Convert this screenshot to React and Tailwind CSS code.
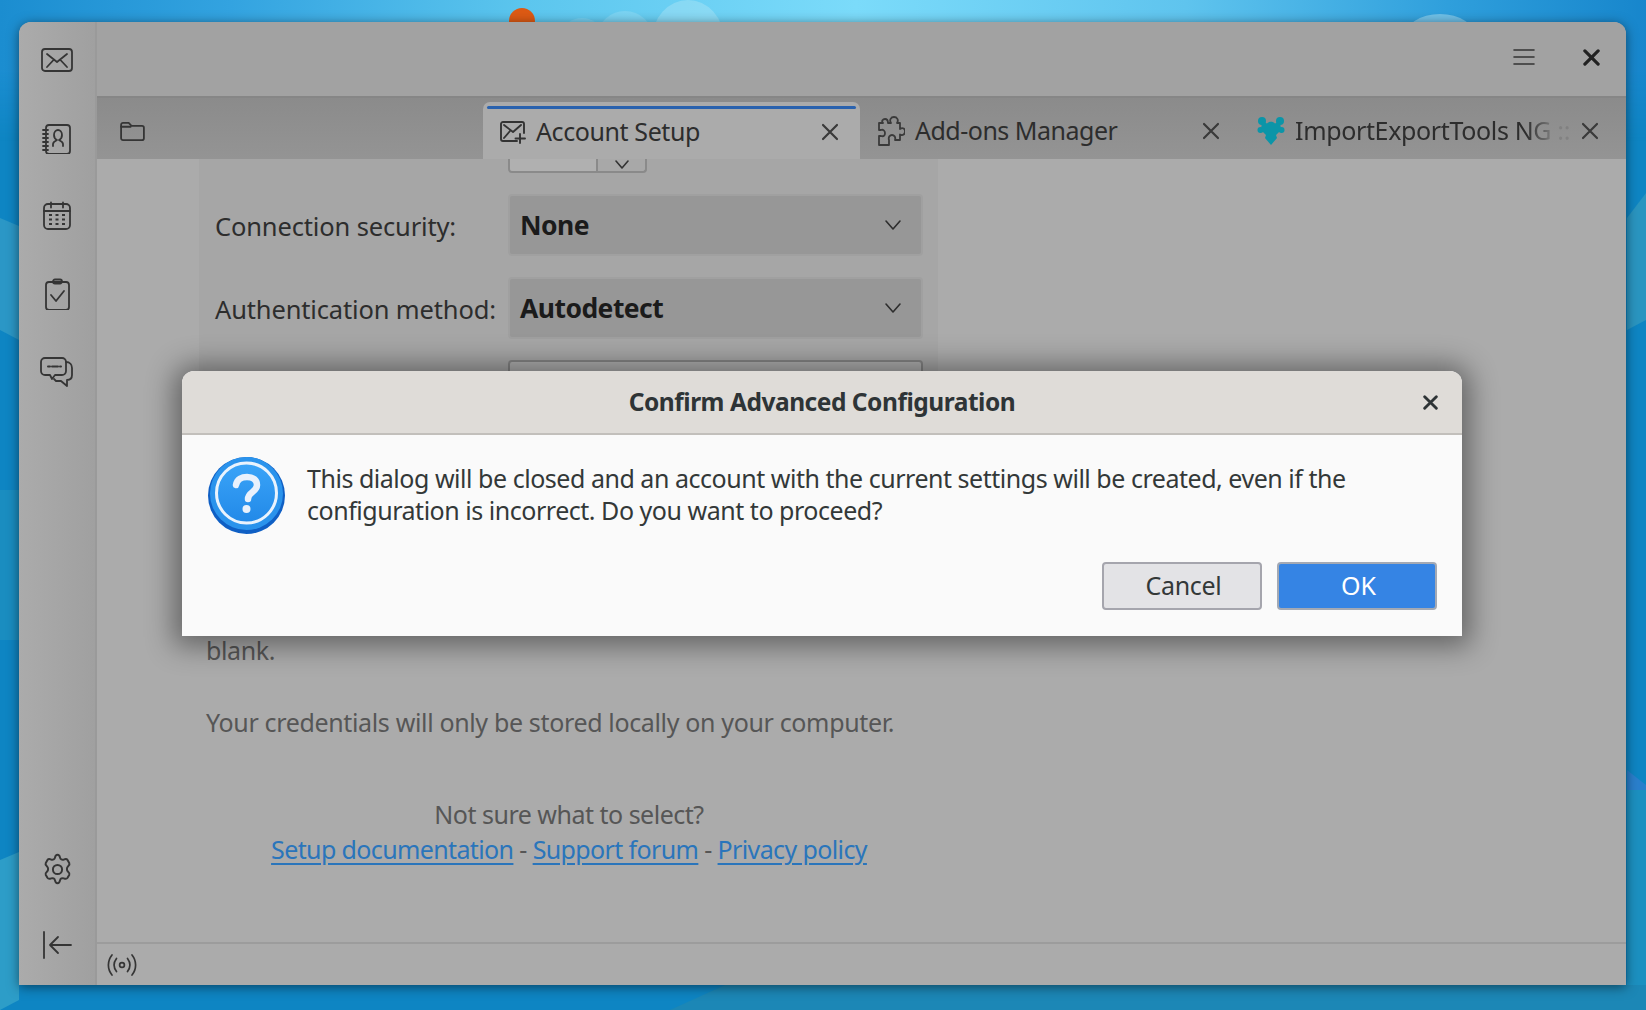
import React from "react";

const Ic = ({ w = 32, h = 32, vb = "0 0 32 32", sw = 1.8, c = "#353535", children, className = "" }) => (
  <svg width={w} height={h} viewBox={vb} fill="none" stroke={c} strokeWidth={sw} strokeLinecap="round" strokeLinejoin="round" className={className}>{children}</svg>
);

const X = ({ s = 18, sw = 2.2, c = "#3a3a3a" }) => (
  <Ic w={s} h={s} vb="0 0 18 18" sw={sw} c={c}><path d="M2 2l14 14M16 2L2 16" /></Ic>
);
const Chevron = ({ c = "#333" }) => (
  <Ic w={18} h={12} vb="0 0 18 12" sw={1.6} c={c}><path d="M2 2l7 8 7-8" /></Ic>
);

const Mail = () => (
  <Ic><rect x="1" y="5" width="30" height="22" rx="3" /><path d="M6 10l10 8 10-8M6 23l7-7.5M26 23l-7-7.5" /></Ic>
);
const Contacts = () => (
  <Ic><rect x="5" y="3" width="24" height="29" rx="3" /><path d="M2 8h5M2 12h5M2 16h5M2 20h5M2 24h5M2 28h5" /><path d="M12 24v-2c0-2 2-3 4-4-2-1-3-3-3-5 0-3 2-5 4-5s4 2 4 5c0 2-1 4-3 5 2 1 4 2 4 4v2" /></Ic>
);
const Calendar = () => (
  <Ic><rect x="3" y="4" width="26" height="25" rx="4" /><path d="M3 11h26M10 2.5v5M22 2.5v5" /><path strokeWidth="2.2" strokeLinecap="butt" d="M8 15h3M14.5 15h3M21 15h3M8 19.5h3M14.5 19.5h3M21 19.5h3M8 24h3M14.5 24h3M21 24h3" /></Ic>
);
const Tasks = () => (
  <Ic><rect x="5" y="4" width="23" height="28" rx="3" /><rect x="12" y="1.5" width="9" height="4" rx="2" /><path d="M10 17l5 6 8-10" /></Ic>
);
const Chat = () => (
  <Ic w={34} h={34} vb="0 0 34 34"><path d="M5 2h17a4 4 0 0 1 4 4v9a4 4 0 0 1-4 4h-7l-3 4-2-4H5a4 4 0 0 1-4-4V6a4 4 0 0 1 4-4z" /><path strokeWidth="2" d="M8 10.5h2M12 10.5h6M20 10.5h1" /><path d="M26 6c4 0 6 3 6 6v7c0 3-2 5-5 5v6l-6-5h-5l-2-2" /></Ic>
);
const Gear = () => (
  <Ic w={35} h={35}><circle cx="16" cy="16" r="4.2" /><path d="M16 2.5c1.600 0 2 1 2.300 2.600.3 1.500 1.900 2.400 3.400 1.800 1.500-.6 2.700-.8 3.500.5l1.600 2.800c.7 1.300-.2 2-1.300 3-1.200 1-1.200 3.600 0 4.600 1.100 1 2 1.700 1.300 3l-1.600 2.800c-.8 1.300-2 1.100-3.500.5-1.500-.6-3.100.3-3.400 1.800-.3 1.600-.7 2.600-2.300 2.600s-2-1-2.300-2.600c-.3-1.500-1.900-2.400-3.400-1.800-1.500.6-2.700.8-3.500-.5l-1.600-2.800c-.7-1.300.2-2 1.300-3 1.200-1 1.200-3.600 0-4.600-1.100-1-2-1.700-1.300-3l1.600-2.800c.8-1.300 2-1.100 3.500-.5 1.500.6 3.100-.3 3.400-1.800.3-1.600.7-2.600 2.300-2.600z" /></Ic>
);
const Collapse = () => (
  <Ic><path d="M3 3v26M30 16H9M17 8l-8 8 8 8" /></Ic>
);
const Signal = () => (
  <Ic w={30} h={24} vb="0 0 30 24" sw={1.7}><circle cx="15" cy="12" r="2.4" /><path d="M9.500 5.500c-3 4-3 9 0 13M20.500 5.500c3 4 3 9 0 13M5 2c-4.800 6-4.800 14 0 20M25 2c4.800 6 4.800 14 0 20" /></Ic>
);
const Folder = () => (
  <Ic w={25} h={19} vb="0 0 26 20" sw={1.9}><path d="M1 3a2 2 0 0 1 2-2h6l3 3h11a2 2 0 0 1 2 2v11a2 2 0 0 1-2 2H3a2 2 0 0 1-2-2z" /><path d="M1 5h10" /></Ic>
);
const AccountIcon = () => (
  <Ic w={26} h={24} vb="0 0 26 24" sw={1.9} c="#333"><path d="M24 13V4a2 2 0 0 0-2-2H3a2 2 0 0 0-2 2v15a2 2 0 0 0 2 2h14" /><path d="M4 5l9 7 8-7M4 18l6-7" /><path d="M20 14v9M15.500 18.500H25" /></Ic>
);
const Puzzle = () => (
  <Ic w={28} h={30} vb="0 0 28 30" sw={1.8} c="#3a3a3a"><path d="M11 7h3c-2-3 0-6 3-6s5 3 3 6h3v6c3-2 5 0 5 2.500S26 20 23 18.500V24h-5c1-3-1-5-3-5s-4 2-3 5v5H2v-9h2c3 1 4-1 4-3s-2-4-4-3H2V7h4c-2-2 0-4 2-4s3 2 3 4z" /></Ic>
);
const TealPuzzle = () => (
  <svg width="28" height="30" viewBox="0 0 28 30" fill="#0b95a8">
    <circle cx="5" cy="5" r="4" /><circle cx="23" cy="5" r="4" /><circle cx="3.500" cy="14" r="3" /><circle cx="24.500" cy="14" r="3" />
    <path d="M5 5l5 2.500c2-2.500 6-2.500 8 0L23 5l1 9-5 5 1 3-6 7-6-7 1-3-5-5z" />
  </svg>
);
const Question = () => (
  <svg width="77" height="77" viewBox="0 0 77 77">
    <defs>
      <linearGradient id="q" x1="0" y1="0" x2="0" y2="1"><stop offset="0" stopColor="#3aa4f8" /><stop offset="1" stopColor="#2289e8" /></linearGradient>
    </defs>
    <circle cx="38.500" cy="38.500" r="38.500" fill="#0f5fc4" />
    <circle cx="38.500" cy="36.500" r="36.500" fill="#2a93ec" />
    <circle cx="38.500" cy="36" r="30" fill="url(#q)" stroke="#e9f3fd" strokeWidth="3" />
    <path d="M28 28c1-6 6-8 11-8 6 0 10 3 10 8 0 7-9 7-9 14" fill="none" stroke="#e9f1fc" strokeWidth="6.500" strokeLinecap="round" />
    <circle cx="38.500" cy="52" r="4" fill="#e9f1fc" />
  </svg>
);

const Wallpaper = () => (
  <svg className="absolute inset-0" width="1646" height="1010" viewBox="0 0 1646 1010">
    <defs>
      <linearGradient id="top" x1="0" y1="0" x2="1" y2="0">
        <stop offset="0" stopColor="#1b8dd0" /><stop offset="0.14" stopColor="#33a3e0" /><stop offset="0.32" stopColor="#5cc6ee" /><stop offset="0.52" stopColor="#7bdbfa" /><stop offset="0.72" stopColor="#5fc4ee" /><stop offset="0.88" stopColor="#2f9fdc" /><stop offset="1" stopColor="#1786cc" />
      </linearGradient>
      <linearGradient id="fade" x1="0" y1="0" x2="0" y2="1">
        <stop offset="0" stopColor="#fff" /><stop offset="0.07" stopColor="#fff" /><stop offset="0.14" stopColor="#000" /><stop offset="1" stopColor="#000" />
      </linearGradient>
      <mask id="m"><rect width="1646" height="1010" fill="url(#fade)" /></mask>
    </defs>
    <rect width="1646" height="1010" fill="#0e85c3" />
    <rect width="1646" height="1010" fill="url(#top)" mask="url(#m)" />
    <path d="M0 218L19 226V340L0 330Z" fill="#2b97c6" />
    <path d="M0 490L19 490V640H0Z" fill="#1a8dc0" />
    <path d="M0 860L19 852V1000L0 1010Z" fill="#2d9dc8" />
    <path d="M1627 218L1646 193V320L1627 330Z" fill="#2a95c0" />
    <path d="M1627 770L1646 785V800L1627 790Z" fill="#2a7fcc" />
    <path d="M1627 790H1646V1010H1627Z" fill="#1c90c0" />
    <path d="M670 1010L725 985H1646V1010Z" fill="#1c87b6" />
    <circle cx="522" cy="21" r="13" fill="#dd5a14" />
    <ellipse cx="688" cy="40" rx="36" ry="40" fill="#c8ebf5" fillOpacity="0.32" />
    <ellipse cx="625" cy="38" rx="28" ry="27" fill="#c8ebf5" fillOpacity="0.22" />
    <ellipse cx="582" cy="32" rx="18" ry="14" fill="#c8ebf5" fillOpacity="0.18" />
    <ellipse cx="1440" cy="38" rx="36" ry="24" fill="#c8ebf5" fillOpacity="0.42" />
  </svg>
);

const Select = ({ children }) => (
  <div className="h-[62px] w-[415px] rounded-[4px] border-2 border-[#a0a0a0] bg-[#979797] flex items-center justify-between pl-[10px] pr-[19px]">
    <span className="text-[26.5px] font-bold text-[#1b1b1b] tracking-[-0.55px] pt-[2px]">{children}</span>
    <Chevron c="#2e2e2e" />
  </div>
);

const Row = ({ label, children, className = "" }) => (
  <div className={`flex items-center shrink-0 ${className}`}>
    <span className="w-[309px] pl-[16px] pt-[2px] shrink-0 text-[25.5px] text-[#2d2d2d] tracking-[-0.15px] whitespace-nowrap">{label}</span>
    {children}
  </div>
);

export default function App() {
  return (
    <div className="relative w-[1646px] h-[1010px] overflow-hidden pl-[19px] pt-[22px] font-['Noto_Sans',sans-serif]">
      <Wallpaper />

      {/* window */}
      <div className="relative w-[1607px] h-[963px] rounded-t-[12px] overflow-hidden flex bg-[#ababab] shadow-[0_2px_12px_rgba(0,0,0,0.5)]">
        <aside className="w-[78px] shrink-0 flex flex-col items-center border-r-2 border-[#9a9a9a] bg-[linear-gradient(90deg,#ababab,#a0a0a0)] pt-[22px] pb-[24px]">
          <div className="flex flex-col items-center gap-[46px]">
            <Mail /><Contacts /><Calendar /><Tasks /><Chat />
          </div>
          <div className="mt-auto flex flex-col items-center gap-[42px]">
            <Gear /><Collapse />
          </div>
        </aside>

        <div className="flex-1 min-w-0 flex flex-col">
          <header className="h-[74px] shrink-0 bg-[#a2a2a2] flex items-center justify-end pr-[26px] pb-[4px] gap-[48px]">
            <Ic w={22} h={18} vb="0 0 22 18" sw={1.6} c="#333"><path d="M1 2h20M1 9h20M1 16h20" /></Ic>
            <X s={17} sw={3.4} c="#222" />
          </header>

          <nav className="h-[63px] shrink-0 border-t-2 border-[#868686] bg-[linear-gradient(180deg,#8b8b8b,#949494)] flex items-end pl-[23px] relative">
            <div className="w-[363px] h-[57px] shrink-0 flex items-center pt-[2px]"><Folder /></div>
            <div className="w-[377px] h-[57px] shrink-0 rounded-t-[7px] bg-[#ababab] px-[4px] pt-[4px] flex flex-col">
              <div className="h-[3px] bg-[#2a62ae] rounded-[2px]" />
              <div className="flex-1 flex items-center pl-[13px] pr-[17px] pb-[4px]">
                <AccountIcon />
                <span className="ml-[10px] text-[25px] text-[#2d2d2d] tracking-[-0.4px] whitespace-nowrap">Account Setup</span>
                <span className="ml-auto"><X /></span>
              </div>
            </div>
            <div className="w-[380px] h-[57px] shrink-0 flex items-center pl-[17px] pr-[20px] pt-[1px]">
              <Puzzle />
              <span className="ml-[10px] text-[25px] text-[#2d2d2d] tracking-[-0.5px] whitespace-nowrap">Add-ons Manager</span>
              <span className="ml-auto"><X /></span>
            </div>
            <div className="flex-1 min-w-0 h-[57px] flex items-center pl-[17px] pr-[27px] pt-[1px]">
              <TealPuzzle />
              <span className="ml-[10px] text-[25px] text-[#2d2d2d] tracking-[-0.35px] whitespace-nowrap [mask-image:linear-gradient(90deg,#000_84%,rgba(0,0,0,0.15)_94%)]">ImportExportTools NG ::</span>
              <span className="ml-auto"><X /></span>
            </div>
          </nav>

          <main className="flex-1 min-h-0 overflow-hidden pl-[102px] bg-[#ababab]">
            <div className="w-[739px] h-[300px] bg-[#a6a6a6] flex flex-col">
              <div className="ml-[309px] w-[139px] h-[14px] shrink-0 border-2 border-t-0 border-[#8a8a8a] rounded-b-[4px] bg-[#a8a8a8] flex">
                <div className="w-[88px] border-r-2 border-[#8a8a8a] bg-[#b0b0b0] rounded-bl-[3px]" />
                <div className="flex-1 flex justify-center items-end pb-[2px]"><Ic w={14} h={9} vb="0 0 14 9" sw={1.6} c="#333"><path d="M1 1l6 7 6-7" /></Ic></div>
              </div>
              <Row label="Connection security:" className="mt-[21px]"><Select>None</Select></Row>
              <Row label="Authentication method:" className="mt-[21px]"><Select>Autodetect</Select></Row>
              <div className="ml-[309px] mt-[21px] h-[62px] w-[415px] shrink-0 rounded-[4px] border-2 border-[#858585] bg-[#b0b0b0]" />
            </div>
          </main>

          <footer className="h-[43px] shrink-0 border-t-2 border-[#9c9c9c] bg-[#ababab] flex items-center pl-[10px]">
            <Signal />
          </footer>
        </div>

        {/* lower text over the content column */}
        <div className="absolute left-[187px] top-[610px] w-[740px] text-[25px] text-[#565656] tracking-[-0.4px]">
          <div className="h-[36px] leading-[36px]">blank.</div>
          <div className="mt-[36px] h-[36px] leading-[36px] tracking-[-0.35px]">Your credentials will only be stored locally on your computer.</div>
          <div className="mt-[57px] w-[726px] text-center leading-[35px] tracking-[-0.5px]">
            <div>Not sure what to select?</div>
            <div className="whitespace-nowrap tracking-[-0.62px]">
              <a className="text-[#2a75bb] underline underline-offset-[4px]">Setup documentation</a>
              {" - "}
              <a className="text-[#2a75bb] underline underline-offset-[4px]">Support forum</a>
              {" - "}
              <a className="text-[#2a75bb] underline underline-offset-[4px]">Privacy policy</a>
            </div>
          </div>
        </div>
      </div>

      {/* modal */}
      <div className="absolute left-[182px] top-[371px] w-[1280px] h-[265px] rounded-t-[12px] bg-[#fafafa] flex flex-col shadow-[0_2px_28px_8px_rgba(0,0,0,0.42)]">
        <div className="h-[64px] shrink-0 rounded-t-[12px] bg-[#dfdcd8] border-b-2 border-[#c2bfbb] relative flex items-center justify-center">
          <span className="text-[24.5px] font-bold text-[#2e3436] tracking-[-0.47px]">Confirm Advanced Configuration</span>
          <span className="absolute right-[24px] top-[24px]"><X s={15} sw={3.4} c="#2e3436" /></span>
        </div>
        <div className="flex-1 flex flex-col pl-[26px] pr-[25px]">
          <div className="flex pt-[22px]">
            <Question />
            <p className="ml-[22px] mt-[6px] text-[25px] leading-[31.500px] text-[#333838] tracking-[-0.47px] whitespace-nowrap">
              This dialog will be closed and an account with the current settings will be created, even if the<br />configuration is incorrect. Do you want to proceed?
            </p>
          </div>
          <div className="mt-[28px] flex justify-end gap-[15px]">
            <button className="w-[160px] h-[48px] pl-[3px] rounded-[4px] border-2 border-[#a5a5ad] bg-[#e3e3e6] text-[25px] text-[#333838] tracking-[-0.3px]">Cancel</button>
            <button className="w-[160px] h-[48px] pl-[3px] rounded-[4px] border-2 border-[#a3a9b4] bg-[#3584e4] text-[25px] text-white">OK</button>
          </div>
        </div>
      </div>
    </div>
  );
}
